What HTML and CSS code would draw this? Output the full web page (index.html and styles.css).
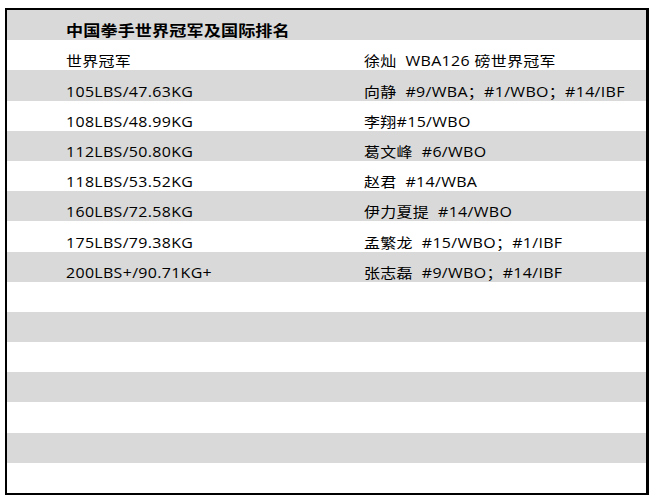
FILE: index.html
```html
<!DOCTYPE html>
<html lang="zh-CN">
<head>
<meta charset="utf-8">
<title>中国拳手世界冠军及国际排名</title>
<link rel="stylesheet" href="styles.css">
</head>
<body>
<div class="sheet">
  <div class="row title"><span class="cell">中国拳手世界冠军及国际排名</span></div>
  <div class="row"><span class="cell">世界冠军</span><span class="cell">徐灿  WBA126 磅世界冠军</span></div>
  <div class="row"><span class="cell">105LBS/47.63KG</span><span class="cell">向静  #9/WBA；#1/WBO；#14/IBF</span></div>
  <div class="row"><span class="cell">108LBS/48.99KG</span><span class="cell">李翔#15/WBO</span></div>
  <div class="row"><span class="cell">112LBS/50.80KG</span><span class="cell">葛文峰  #6/WBO</span></div>
  <div class="row"><span class="cell">118LBS/53.52KG</span><span class="cell">赵君  #14/WBA</span></div>
  <div class="row"><span class="cell">160LBS/72.58KG</span><span class="cell">伊力夏提  #14/WBO</span></div>
  <div class="row"><span class="cell">175LBS/79.38KG</span><span class="cell">孟繁龙  #15/WBO；#1/IBF</span></div>
  <div class="row"><span class="cell">200LBS+/90.71KG+</span><span class="cell">张志磊  #9/WBO；#14/IBF</span></div>
  <div class="row"></div>
  <div class="row"></div>
  <div class="row"></div>
  <div class="row"></div>
  <div class="row"></div>
  <div class="row"></div>
  <div class="row"></div>
</div>
</body>
</html>
```

FILE: styles.css
```css
html, body {
  margin: 0;
  padding: 0;
  background: #ffffff;
}

.sheet {
  margin: 8px 0 0 5px;
  width: 644px;
  height: 487px;
  box-sizing: border-box;
  border: 2px solid #000;
  border-right-width: 3px;
  display: grid;
  grid-template-rows: repeat(16, 1fr);
  font-family: "Open Sans", "Noto Sans CJK SC", sans-serif;
  color: #000;
}

.row {
  display: grid;
  grid-template-columns: 298px 1fr;
  padding-left: 59px;
  padding-bottom: 2px;
  align-items: end;
  background: #ffffff;
}

.row:nth-child(odd) {
  background: #d9d9d9;
}

.cell {
  font-size: 14px;
  line-height: 14px;
  letter-spacing: 0.28px;
  white-space: pre;
  transform: scaleX(1.14);
  transform-origin: left bottom;
}

.title .cell {
  font-size: 15px;
  line-height: 15px;
  letter-spacing: 0.1px;
  font-weight: bold;
}
```
